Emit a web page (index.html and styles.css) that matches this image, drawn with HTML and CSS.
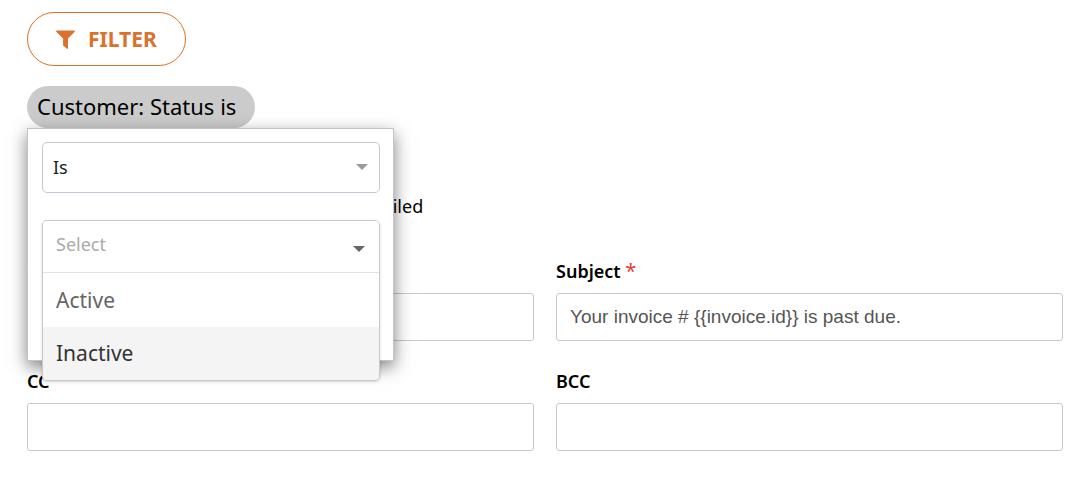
FILE: index.html
```html
<!DOCTYPE html>
<html lang="en">
<head>
    <meta charset="utf-8">
    <title>Invoice Reminder</title>
    <link rel="stylesheet" href="styles.css">
</head>
<body>
    <div class="page">

        <button class="btn-filter" type="button">
            <svg class="icon-filter" viewBox="0 0 19 19" aria-hidden="true">
                <path d="M0.8 0.5H18.2C18.9 0.5 19.1 1.3 18.7 1.8L12 8.4V18.2C12 18.8 11.4 19 11 18.7L7.6 16.1C7.3 15.9 7.1 15.6 7.1 15.2V8.4L0.3 1.8C-0.1 1.3 0.1 0.5 0.8 0.5Z"/>
            </svg>
            FILTER
        </button>

        <div class="filter">
            <button class="filter-chip" type="button">Customer: Status is</button>

            <div class="filter-popup">
                <div class="select-box">
                    <select class="select-operator" aria-label="Operator">
                        <option>Is</option>
                        <option>Is not</option>
                    </select>
                    <span class="caret"></span>
                </div>

                <div class="dropdown">
                    <div class="dropdown-head">
                        <select class="select-value" aria-label="Status">
                            <option>Select</option>
                            <option>Active</option>
                            <option>Inactive</option>
                        </select>
                        <span class="caret caret-dark"></span>
                    </div>
                    <ul class="dropdown-list" role="listbox" aria-label="Status">
                        <li class="dropdown-item" role="option">Active</li>
                        <li class="dropdown-item dropdown-item-active" role="option">Inactive</li>
                    </ul>
                </div>
            </div>
        </div>

        <p class="note">Only customers with this status will be emailed</p>

        <form class="form">
            <div class="field">
                <label for="input-to">To</label>
                <input id="input-to" type="text">
            </div>
            <div class="field">
                <label for="input-subject">Subject <span class="required">*</span></label>
                <input id="input-subject" type="text" value="Your invoice # {{invoice.id}} is past due.">
            </div>
            <div class="field">
                <label for="input-cc">CC</label>
                <input id="input-cc" type="text">
            </div>
            <div class="field">
                <label for="input-bcc">BCC</label>
                <input id="input-bcc" type="text">
            </div>
        </form>

    </div>
</body>
</html>
```
FILE: styles.css
```css
/* reset */
* {
    box-sizing: border-box;
}

body {
    margin: 0;
    background-color: white;
    color: black;
    font-family: "Noto Sans", sans-serif;
    font-size: 18px;
}

button, select {
    font-family: inherit;
    cursor: pointer;
}

/* setup */
.page {
    padding: 12px 27px;
}

.btn-filter {
    display: flex;
    align-items: center;
    gap: 13px;
    height: 54px;
    padding: 0 28px;
    border: 1px solid #d9722b;
    border-radius: 27px;
    background-color: white;
    color: #d9722b;
    font-size: 21px;
    font-weight: 700;
}

.icon-filter {
    width: 19px;
    height: 19px;
    fill: #d9722b;
}

/* filter chip and its popup */
.filter {
    position: relative;
    margin-top: 20px;
}

.filter-chip {
    display: block;
    min-width: 228px;
    height: 42px;
    padding: 0 10px 2px;
    border: none;
    border-radius: 21px;
    background-color: #cbcbcb;
    color: black;
    font-size: 22px;
    text-align: left;
}

.filter-popup {
    position: absolute;
    top: 100%;
    left: 0;
    width: 367px;
    height: 233px;
    padding: 13px 13px 13px 14px;
    border: 1px solid #c4c4c8;
    background-color: white;
    box-shadow: 0 6px 16px rgba(0, 0, 0, 0.5);
}

.select-box {
    position: relative;
    margin-bottom: 27px;
}

.select-operator {
    display: block;
    width: 100%;
    height: 51px;
    padding: 0 10px 2px;
    border: 1px solid #c8c6d4;
    border-radius: 5px;
    background-color: white;
    color: #222;
    font-size: 18px;
    appearance: none;
}

.caret {
    position: absolute;
    top: 22px;
    right: 12px;
    border: 6px solid transparent;
    border-top-color: #999;
    border-bottom: none;
    pointer-events: none;
}

.caret-dark {
    top: 25px;
    right: 14px;
    border-top-color: #666;
}

.dropdown {
    border: 1px solid #c8c8cc;
    border-radius: 5px;
    background-color: white;
    box-shadow: 0 1px 3px rgba(0, 0, 0, 0.15);
    overflow: hidden;
}

.dropdown-head {
    position: relative;
    border-bottom: 1px solid #e2e2e2;
}

.select-value {
    display: block;
    width: 100%;
    height: 51px;
    padding: 0 13px 6px;
    border: none;
    background-color: white;
    color: #aaa;
    font-size: 18px;
    appearance: none;
}

.dropdown-list {
    margin: 0;
    padding: 1px 0 0;
    list-style: none;
}

.dropdown-item {
    padding: 0 13px;
    color: #666;
    font-size: 21px;
    line-height: 53px;
}

.dropdown-item-active {
    background-color: #f4f4f4;
    color: #333;
}

/* email form */
.note {
    margin: 66px 0 40px;
    line-height: 25px;
}

.form {
    display: grid;
    grid-template-columns: 1fr 1fr;
    gap: 28px 22px;
}

.field label {
    display: block;
    margin-bottom: 9px;
    font-weight: 600;
    line-height: 25px;
}

.required {
    color: #e03c31;
    font-size: 20px;
    font-weight: 400;
    line-height: 1;
}

.field input {
    display: block;
    width: 100%;
    height: 48px;
    padding: 0 13px;
    border: 1px solid #c8c6d4;
    border-radius: 3px;
    background-color: white;
    color: #555;
    font-family: "Liberation Sans", Arial, sans-serif;
    font-size: 19px;
}
```
